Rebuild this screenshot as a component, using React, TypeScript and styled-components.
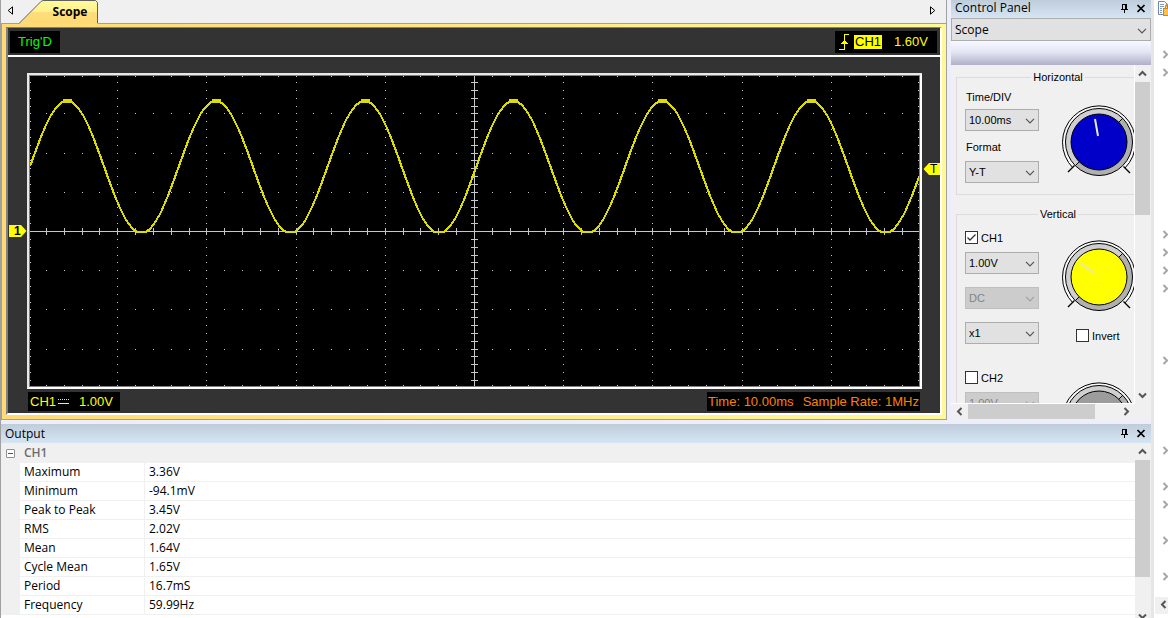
import React, { useId } from "react";
import styled, { createGlobalStyle, css } from "styled-components";

const ui = `"Open Sans", "Noto Sans", sans-serif`;
const classic = `"Liberation Sans", Arial, sans-serif`;

const GlobalStyle = createGlobalStyle`
  *, *::before, *::after { box-sizing: border-box; }
  body { margin: 0; background: #fff; color: #000; font: 12px/16px ${ui}; overflow: hidden; }
  button, select, input { font: inherit; color: inherit; margin: 0; }
  button { border: 0; padding: 0; background: none; }
  svg { display: block; }
`;

const Page = styled.div`
  display: grid;
  grid-template-columns: minmax(0, 1fr) 17px;
  height: 100vh;
  overflow: hidden;
`;

const Workspace = styled.main`
  display: flex;
  flex-direction: column;
  gap: 4px;
  border-left: 1px solid #a0a0a0;
  background: #eeeefb;
  min-width: 0;
`;

const UpperArea = styled.div`
  display: grid;
  grid-template-columns: minmax(0, 1fr) 200px;
  gap: 4px;
`;

/* ---------- scope document ---------- */

const ScopePane = styled.section`
  display: flex;
  flex-direction: column;
  border-right: 1px solid #a0a0a0;
  border-bottom: 1px solid #a0a0a0;
  min-width: 0;
`;

const TabBar = styled.div`
  display: flex;
  align-items: flex-start;
  height: 24px;
  padding: 0 10px 0 6px;
  background: #f0f0f0;
  border-bottom: 1px solid #a0a0a0;
`;

const TabScroll = styled.button`
  height: 21px;
  width: 6px;
  display: grid;
  place-items: center;
`;

const Tab = styled.button`
  position: relative;
  width: 80px;
  height: 24px;
  margin: 0 auto 0 6px;
  padding-left: 22px;
  font-weight: 700;
  svg { position: absolute; inset: 0; }
  span { position: relative; }
`;

const Frame = styled.div`
  padding: 3px 4px 4px 4px;
  background: linear-gradient(to right, #ffda75, #fff896);
  border-left: 1px solid #a0a0a0;
`;

const Instrument = styled.div`
  display: flex;
  flex-direction: column;
  background: #333;
  border: 2px solid #fff;
  border-top-color: #808080;
  border-left-color: #808080;
  border-top-width: 1px;
`;

const StatusRow = styled.div`
  display: flex;
  justify-content: space-between;
  align-items: flex-start;
  height: 29px;
  padding: 3px 3px 0 2px;
  border-bottom: 2px solid #fff;
  font: 13px/22px ${classic};
`;

const Readout = styled.div<{ $color: string }>`
  display: flex;
  align-items: center;
  background: #000;
  color: ${(p) => p.$color};
  white-space: pre;
`;

const TrigState = styled(Readout)`
  width: 50px;
  height: 22px;
  padding-left: 8px;
`;

const TrigLevel = styled(Readout)`
  width: 102px;
  height: 22px;
  padding-left: 4px;
  mark {
    margin: 0 12px 0 4px;
    padding: 0 1px;
    background: #ff0;
    color: #000;
    line-height: 14px;
  }
`;

const Stage = styled.div`
  position: relative;
  padding: 16px 18px 3px 19px;
`;

const PlotFrame = styled.div`
  border: 2px solid #e8e8e8;
  border-bottom-color: #fff;
  border-right-color: #fff;
`;

const Plot = styled.svg`
  width: 100%;
  height: 312px;
  background: #000;
  border: 1px solid #808080;
`;

const ChannelMarker = styled.svg`
  position: absolute;
  left: 1px;
  top: 168px;
`;

const TriggerMarker = styled.svg`
  position: absolute;
  right: 0;
  top: 106px;
`;

const MarkerText = styled.text<{ $bold?: boolean }>`
  font: ${(p) => (p.$bold ? 700 : 400)} 12px ${classic};
`;

const FooterRow = styled.div`
  display: flex;
  justify-content: space-between;
  padding: 0 20px 2px 20px;
  font: 13px/19px ${classic};
`;

const ChannelReadout = styled(Readout)`
  width: 92px;
  padding-left: 2px;
  svg { margin: 0 10px 0 2px; }
`;

const TimeReadout = styled(Readout)`
  width: 213px;
  justify-content: space-between;
  padding: 0 1px;
`;

/* ---------- shared docking parts ---------- */

const Caption = styled.header`
  display: flex;
  align-items: center;
  gap: 9px;
  padding: 0 5px 0 4px;
  background: linear-gradient(#bfcddb, #d6e5f3);
  h2 { flex: 1; margin: 0; font: 12px/16px ${ui}; }
`;

const SideCaption = styled(Caption)`
  height: 18px;
  padding-bottom: 2px;
`;

const OutputCaption = styled(Caption)`
  height: 19px;
`;

const ScrollBar = styled.div<{ $horizontal?: boolean }>`
  display: flex;
  flex-direction: ${(p) => (p.$horizontal ? "row" : "column")};
  background: #f0f0f0;
  justify-content: space-between;
  flex: none;
  ${(p) => (p.$horizontal ? css`height: 16px; padding-right: 16px;` : css`width: 16px;`)}
`;

const ScrollButton = styled.button<{ $horizontal?: boolean }>`
  width: ${(p) => (p.$horizontal ? 17 : 15)}px;
  height: ${(p) => (p.$horizontal ? 15 : 17)}px;
  flex: none;
  display: grid;
  place-items: center;
`;

const Thumb = styled.div<{ $length: number; $horizontal?: boolean }>`
  background: #cdcdcd;
  flex: none;
  ${(p) =>
    p.$horizontal
      ? css`width: ${p.$length}px; height: 15px; margin-right: auto;`
      : css`height: ${p.$length}px; width: 15px; margin-bottom: auto;`}
`;

/* ---------- control panel ---------- */

const ControlPane = styled.aside`
  display: flex;
  flex-direction: column;
  min-width: 0;
`;

const SelectBox = styled.div<{ $wide?: boolean }>`
  position: relative;
  select {
    appearance: none;
    display: block;
    width: 100%;
    height: ${(p) => (p.$wide ? 23 : 22)}px;
    padding: 0 20px 0 3px;
    border: 1px solid #adadad;
    border-radius: 0;
    background: #e1e1e1;
    opacity: 1;
  }
  select:disabled { background: #cccccc; border-color: #bfbfbf; color: #838383; }
  svg { position: absolute; right: 4px; top: 50%; margin-top: -2px; pointer-events: none; }
`;

const Banner = styled.div`
  height: 24px;
  background: linear-gradient(#f6faff, #e4e6f4 45%, #b0b0c8);
`;

const Viewport = styled.div`
  display: flex;
  height: 339px;
  background: #f0f0f0;
`;

const Settings = styled.div`
  flex: 1;
  min-width: 0;
  padding: 5px 0 0 5px;
  overflow: hidden;
  font: 11px/14px ${classic};
  border-right: 1px solid #fff;
  border-bottom: 1px solid #fff;
`;

const Group = styled.fieldset`
  display: grid;
  grid-template-columns: 74px 76px;
  column-gap: 22px;
  width: 204px;
  margin: 0 0 12px;
  padding: 0 8px;
  border: 1px solid #dcdcdc;
  legend { margin: 0 auto; padding: 0 2px; }
`;

const Column = styled.div<{ $top: number; $bottom?: number }>`
  display: flex;
  flex-direction: column;
  padding: ${(p) => p.$top}px 0 ${(p) => p.$bottom ?? 0}px;
`;

const FieldLabel = styled.label<{ $below: number }>`
  padding-left: 1px;
  margin-bottom: ${(p) => p.$below}px;
`;

const Spacer = styled.div<{ $size: number }>`
  flex: none;
  height: ${(p) => p.$size}px;
`;

const CheckLabel = styled.label<{ $indent?: number }>`
  display: flex;
  align-items: center;
  position: relative;
  height: 13px;
  gap: 3px;
  padding-left: ${(p) => p.$indent ?? 0}px;
  input {
    appearance: none;
    width: 13px;
    height: 13px;
    border: 1px solid #333;
    background: #fff;
  }
  svg { position: absolute; left: 2px; top: 3px; pointer-events: none; }
`;

/* ---------- output ---------- */

const OutputPane = styled.section`
  display: flex;
  flex-direction: column;
  flex: none;
`;

const OutputBody = styled.div`
  display: flex;
  height: 182px;
  overflow: hidden;
  background: #fff;
`;

const ResultTable = styled.table`
  flex: 1;
  width: 100%;
  border-collapse: separate;
  border-spacing: 0;
  table-layout: fixed;
  align-self: flex-start;
  td, th { padding: 0; height: 19px; line-height: 16px; text-align: left; font-weight: 400; }
`;

const MarginCol = styled.col`
  width: 19px;
`;

const NameCol = styled.col`
  width: 125px;
`;

const GroupRow = styled.tr`
  background: #f0f0f0;
  && th { height: 20px; color: #6d6d6d; font-weight: 600; padding-left: 4px; }
`;

const ResultRow = styled.tr`
  && th, && td { border-bottom: 1px solid #f0f0f0; }
  && th { padding-left: 4px; border-right: 1px solid #f0f0f0; }
  && td:last-child { padding-left: 4px; }
`;

const Gutter = styled.td`
  background: #f0f0f0;
`;

const Expander = styled.button`
  display: grid;
  place-items: center;
  width: 9px;
  height: 9px;
  margin-left: 5px;
  border: 1px solid #919191;
  border-radius: 1px;
  background: #fff;
`;

/* ---------- collapsed side tree ---------- */

const SideTree = styled.nav`
  display: flex;
  flex-direction: column;
  border-left: 3px solid #e6e6e6;
  background: #fff;
  overflow: hidden;
`;

const TreeHead = styled.div`
  height: 45px;
  padding: 1px 0 0 4px;
  overflow: hidden;
`;

const TreeRow = styled.button`
  flex: none;
  height: 18px;
  padding-left: 7px;
  text-align: left;
`;

const TreeFoot = styled.div`
  height: 17px;
  margin: 12px 0 0 1px;
  background: #f0f0f0;
  display: flex;
`;

/* ---------- drawings ---------- */

type Direction = "up" | "down" | "left" | "right";
const turn: Record<Direction, number> = { up: 0, right: 90, down: 180, left: 270 };

const BoldChevron = ({ dir, color = "#555" }: { dir: Direction; color?: string }) => (
  <svg width="9" height="9" viewBox="0 0 9 9" aria-hidden="true">
    <path d="M1 6.5 4.5 3 8 6.5" fill="none" stroke={color} strokeWidth="2" transform={`rotate(${turn[dir]} 4.5 4.5)`} />
  </svg>
);

const DropArrow = ({ color = "#555" }: { color?: string }) => (
  <svg width="10" height="6" viewBox="0 0 10 6" aria-hidden="true">
    <path d="M1 .8 5 4.8 9 .8" fill="none" stroke={color} strokeWidth="1.2" />
  </svg>
);

const TabArrow = ({ left }: { left?: boolean }) => (
  <svg width="6" height="9" viewBox="0 0 6 9" aria-hidden="true">
    <path d={left ? "M5.5 .8V8.2L1.2 4.5Z" : "M.5 .8V8.2L4.8 4.5Z"} fill="none" stroke="#000" />
  </svg>
);

const PinIcon = () => (
  <svg width="7" height="9" viewBox="0 0 7 9" aria-hidden="true" shapeRendering="crispEdges">
    <path d="M1.5 0V5M1 .5H6M0 5.5H7M3.5 6V9" fill="none" stroke="#000" />
    <path d="M4 0H6V5H4Z" />
  </svg>
);

const CloseIcon = () => (
  <svg width="9" height="9" viewBox="0 0 9 9" aria-hidden="true">
    <path d="M.5 1 7.5 8M7.5 1 .5 8" stroke="#000" strokeWidth="1.7" />
  </svg>
);

const CaptionButtons = () => (
  <>
    <button aria-label="Auto hide"><PinIcon /></button>
    <button aria-label="Close"><CloseIcon /></button>
  </>
);

const Knob = ({ face, pointer, pointerColor = "#e8e8d8" }: { face: string; pointer?: string; pointerColor?: string }) => (
  <svg width="76" height="76" viewBox="-38 -38 76 76" aria-hidden="true">
    <path d="M-26 26A36.5 36.5 0 1 1 26 26" fill="#f8f8f8" stroke="#000" />
    <circle r="33.5" fill="#cfcfcf" />
    <path d="M23.7-23.7A33.5 33.5 0 0 1-23.7 23.7Z" fill="#b0b0b0" />
    <circle r="33.5" fill="none" stroke="#000" />
    <path d="M-23.7 23.7-19 19M23.7-23.7 19-19" stroke="#000" />
    <circle r="28" fill={face} stroke="#000" />
    <path d="M-31 30-24.5 23.5M31 31 24.5 24.5" stroke="#000" strokeWidth="1.4" />
    {pointer && <path d={pointer} stroke={pointerColor} strokeWidth="2" fill="none" />}
  </svg>
);

/* ---------- plot ---------- */

const W = 889;
const H = 310;
const CX = 444.5;
const CY = 155.5;
const DX = 89.2;
const DY = 39.2;
const PERIOD = 148.8;

const range = (from: number, to: number) => Array.from({ length: to - from + 1 }, (_, i) => from + i);

function graticule() {
  let dots = "";
  let axes = `M0 ${CY}H${W}M${CX} 0V${H}`;
  const dot = (x: number, y: number) => {
    if (x >= 0 && x < W && y >= 0 && y < H) dots += `M${Math.round(x)} ${Math.round(y)}h1v1h-1z`;
  };
  for (const i of range(-24, 24)) {
    const x = CX - 0.5 + (i * DX) / 5;
    for (const j of range(-3, 3)) if (j !== 0) dot(x, CY - 0.5 + j * DY);
    dot(x, 0);
    dot(x, H - 1);
    const px = Math.round(x) + 0.5;
    axes += `M${px} ${CY - 3.5}v7`;
  }
  for (const j of range(-19, 19)) {
    const y = CY - 0.5 + (j * DY) / 5;
    for (const i of range(-4, 4)) if (i !== 0) dot(CX - 0.5 + i * DX, y);
    dot(0, y);
    dot(W - 1, y);
    axes += `M${CX - 3.5} ${Math.round(y) + 0.5}h7`;
  }
  return { dots, axes };
}

function trace() {
  let d = "";
  for (const x of range(0, W)) {
    const s = Math.cos(((x - 37) / PERIOD) * 2 * Math.PI);
    const y = Math.round(Math.min(156, Math.max(25, 91 - s * 66)));
    d += d ? `L${x} ${y}` : `M0 ${y}`;
  }
  return d;
}

const grid = graticule();
const wave = trace();

const peaks = range(0, 5).map((k) => Math.round(33 + k * PERIOD));
const troughs = range(0, 5).map((k) => Math.round(107 + k * PERIOD));

/* ---------- composed controls ---------- */

const Dropdown = ({ value, label, id, disabled, wide }: { value: string; label?: string; id?: string; disabled?: boolean; wide?: boolean }) => (
  <SelectBox $wide={wide}>
    <select id={id} aria-label={label} defaultValue={value} disabled={disabled}>
      <option>{value}</option>
    </select>
    <DropArrow color={disabled ? "#a0a0a0" : "#555"} />
  </SelectBox>
);

const Check = ({ text, checked, indent }: { text: string; checked?: boolean; indent?: number }) => {
  const [on, setOn] = React.useState(!!checked);
  return (
    <CheckLabel $indent={indent}>
      <input type="checkbox" checked={on} onChange={(e) => setOn(e.target.checked)} />
      {on && (
        <svg width="9" height="7" viewBox="0 0 9 7" aria-hidden="true">
          <path d="M.5 3.5 3 6 8.5.5" fill="none" stroke="#333" strokeWidth="1.3" />
        </svg>
      )}
      {text}
    </CheckLabel>
  );
};

const results: [string, string][] = [
  ["Maximum", "3.36V"],
  ["Minimum", "-94.1mV"],
  ["Peak to Peak", "3.45V"],
  ["RMS", "2.02V"],
  ["Mean", "1.64V"],
  ["Cycle Mean", "1.65V"],
  ["Period", "16.7mS"],
  ["Frequency", "59.99Hz"],
];

const closedRows = new Set([0, 1, 10, 11, 12, 13, 17, 22, 24, 25, 27, 29]);

export default function App() {
  const tabFill = useId();
  const timeId = useId();
  const formatId = useId();
  return (
    <>
      <GlobalStyle />
      <Page>
        <Workspace>
          <UpperArea>
            <ScopePane>
              <TabBar>
                <TabScroll aria-label="Previous tab"><TabArrow left /></TabScroll>
                <Tab>
                  <svg width="80" height="24" viewBox="0 0 80 24" aria-hidden="true">
                    <defs>
                      <linearGradient id={tabFill} x2="0" y2="1">
                        <stop offset="0" stopColor="#fffb9a" />
                        <stop offset=".5" stopColor="#fff08c" />
                        <stop offset=".5" stopColor="#ffdd7a" />
                        <stop offset="1" stopColor="#ffda75" />
                      </linearGradient>
                    </defs>
                    <path d="M0 24 22 1.5Q23 .5 25 .5H76.5L78.5 2.5V24Z" fill={`url(#${tabFill})`} />
                    <path d="M0 23.5 22 1.5Q23 .5 25 .5H76.5L78.5 2.5V23" fill="none" stroke="#606060" />
                  </svg>
                  <span>Scope</span>
                </Tab>
                <TabScroll aria-label="Next tab"><TabArrow /></TabScroll>
              </TabBar>
              <Frame>
                <Instrument>
                  <StatusRow>
                    <TrigState $color="#00ff00">Trig'D</TrigState>
                    <TrigLevel $color="#ffff00">
                      <svg width="11" height="18" viewBox="0 0 11 18" aria-hidden="true" shapeRendering="crispEdges">
                        <path d="M0 16.5H5.5V1.5H10" fill="none" stroke="#ff0" />
                        <path d="M5.5 7 9 11H2Z" fill="#ff0" />
                      </svg>
                      <mark>CH1</mark>
                      <span>1.60V</span>
                    </TrigLevel>
                  </StatusRow>
                  <Stage>
                    <PlotFrame>
                      <Plot viewBox={`0 0 ${W} ${H}`} preserveAspectRatio="none" shapeRendering="crispEdges" role="img" aria-label="CH1 waveform">
                        <path d={grid.dots} fill="#c8c8c8" />
                        <path d={grid.axes} fill="none" stroke="#c8c8c8" />
                        <path d={wave} fill="none" stroke="#dcdc00" strokeWidth="2" />
                        {peaks.map((x) => (
                          <rect key={x} x={x} y="23" width="9" height="4" fill="#dcdc00" />
                        ))}
                        {troughs.map((x) => (
                          <rect key={x} x={x} y="155" width="9" height="2" fill="#dcdc00" />
                        ))}
                      </Plot>
                    </PlotFrame>
                    <ChannelMarker width="18" height="12" viewBox="0 0 18 12" aria-label="CH1 zero level">
                      <path d="M0 0H12L17.5 6 12 12H0Z" fill="#ff0" />
                      <MarkerText x="5" y="10" $bold>1</MarkerText>
                    </ChannelMarker>
                    <TriggerMarker width="17" height="12" viewBox="0 0 17 12" aria-label="Trigger level">
                      <path d="M17 0H6L.5 6 6 12H17Z" fill="#ff0" />
                      <MarkerText x="7" y="10">T</MarkerText>
                    </TriggerMarker>
                  </Stage>
                  <FooterRow>
                    <ChannelReadout $color="#ffff00">
                      CH1
                      <svg width="11" height="6" viewBox="0 0 11 6" aria-hidden="true" shapeRendering="crispEdges">
                        <path d="M0 .5H11" stroke="#ff0" strokeDasharray="1 1" />
                        <path d="M0 4.5H11" stroke="#ff0" />
                      </svg>
                      1.00V
                    </ChannelReadout>
                    <TimeReadout $color="#ff8000">
                      <span>Time: 10.00ms</span>
                      <span>Sample Rate: 1MHz</span>
                    </TimeReadout>
                  </FooterRow>
                </Instrument>
              </Frame>
            </ScopePane>

            <ControlPane>
              <SideCaption>
                <h2>Control Panel</h2>
                <CaptionButtons />
              </SideCaption>
              <Dropdown value="Scope" label="Instrument" wide />
              <Banner />
              <Viewport>
                <Settings>
                  <Group>
                    <legend>Horizontal</legend>
                    <Column $top={6} $bottom={11}>
                      <FieldLabel htmlFor={timeId} $below={5}>Time/DIV</FieldLabel>
                      <Dropdown id={timeId} value="10.00ms" />
                      <Spacer $size={9} />
                      <FieldLabel htmlFor={formatId} $below={7}>Format</FieldLabel>
                      <Dropdown id={formatId} value="Y-T" />
                    </Column>
                    <Column $top={20}>
                      <Knob face="#0000c8" pointer="M-4-23-1-6" />
                    </Column>
                  </Group>
                  <Group>
                    <legend>Vertical</legend>
                    <Column $top={10}>
                      <Check text="CH1" checked />
                      <Spacer $size={8} />
                      <Dropdown value="1.00V" label="CH1 volts per division" />
                      <Spacer $size={13} />
                      <Dropdown value="DC" label="CH1 coupling" disabled />
                      <Spacer $size={13} />
                      <Dropdown value="x1" label="CH1 probe" />
                      <Spacer $size={27} />
                      <Check text="CH2" />
                      <Spacer $size={8} />
                      <Dropdown value="1.00V" label="CH2 volts per division" disabled />
                    </Column>
                    <Column $top={18}>
                      <Knob face="#ffff00" pointer="M-19-14-5-4" pointerColor="#e8e8b0" />
                      <Spacer $size={14} />
                      <Check text="Invert" indent={15} />
                      <Spacer $size={39} />
                      <Knob face="#9c9c9c" />
                    </Column>
                  </Group>
                </Settings>
                <ScrollBar>
                  <ScrollButton aria-label="Scroll up"><BoldChevron dir="up" /></ScrollButton>
                  <Thumb $length={133} />
                  <ScrollButton aria-label="Scroll down"><BoldChevron dir="down" /></ScrollButton>
                </ScrollBar>
              </Viewport>
              <ScrollBar $horizontal>
                <ScrollButton $horizontal aria-label="Scroll left"><BoldChevron dir="left" /></ScrollButton>
                <Thumb $length={127} $horizontal />
                <ScrollButton $horizontal aria-label="Scroll right"><BoldChevron dir="right" /></ScrollButton>
              </ScrollBar>
            </ControlPane>
          </UpperArea>

          <OutputPane>
            <OutputCaption>
              <h2>Output</h2>
              <CaptionButtons />
            </OutputCaption>
            <OutputBody>
              <ResultTable>
                <colgroup>
                  <MarginCol />
                  <NameCol />
                  <col />
                </colgroup>
                <tbody>
                  <GroupRow>
                    <td><Expander aria-label="Collapse CH1">
                      <svg width="5" height="1" viewBox="0 0 5 1" aria-hidden="true"><path d="M0 .5H5" stroke="#3c50a0" /></svg>
                    </Expander></td>
                    <th colSpan={2} scope="rowgroup">CH1</th>
                  </GroupRow>
                  {results.map(([name, value]) => (
                    <ResultRow key={name}>
                      <Gutter />
                      <th scope="row">{name}</th>
                      <td>{value}</td>
                    </ResultRow>
                  ))}
                </tbody>
              </ResultTable>
              <ScrollBar>
                <ScrollButton aria-label="Scroll up"><BoldChevron dir="up" /></ScrollButton>
                <Thumb $length={117} />
                <ScrollButton aria-label="Scroll down"><BoldChevron dir="down" /></ScrollButton>
              </ScrollBar>
            </OutputBody>
          </OutputPane>
        </Workspace>

        <SideTree aria-label="Collapsed pane">
          <TreeHead>
            <svg width="16" height="16" viewBox="0 0 16 16" aria-hidden="true">
              <path d="M.5.5H6.5L9.5 3.5V13.5H.5Z" fill="#fff" stroke="#6f87ad" />
              <path d="M2 3.5H6M2 5.5H6M2 7.5H4M2 9.5H4M2 11.5H4" stroke="#7d9ac8" />
              <path d="M7.5 8V6.5A3 3 0 0 1 13.5 6.5V8" fill="none" stroke="#c48a2a" strokeWidth="1.5" />
              <rect x="5.5" y="7.5" width="11" height="7" fill="#ffc04d" stroke="#c48a2a" />
            </svg>
          </TreeHead>
          {range(0, 29).map((i) =>
            closedRows.has(i) ? (
              <TreeRow key={i} aria-label="Expand"><BoldChevron dir="right" color="#a6a6a6" /></TreeRow>
            ) : (
              <Spacer key={i} $size={18} />
            )
          )}
          <TreeFoot>
            <ScrollButton $horizontal aria-label="Scroll left"><BoldChevron dir="left" /></ScrollButton>
          </TreeFoot>
        </SideTree>
      </Page>
    </>
  );
}
